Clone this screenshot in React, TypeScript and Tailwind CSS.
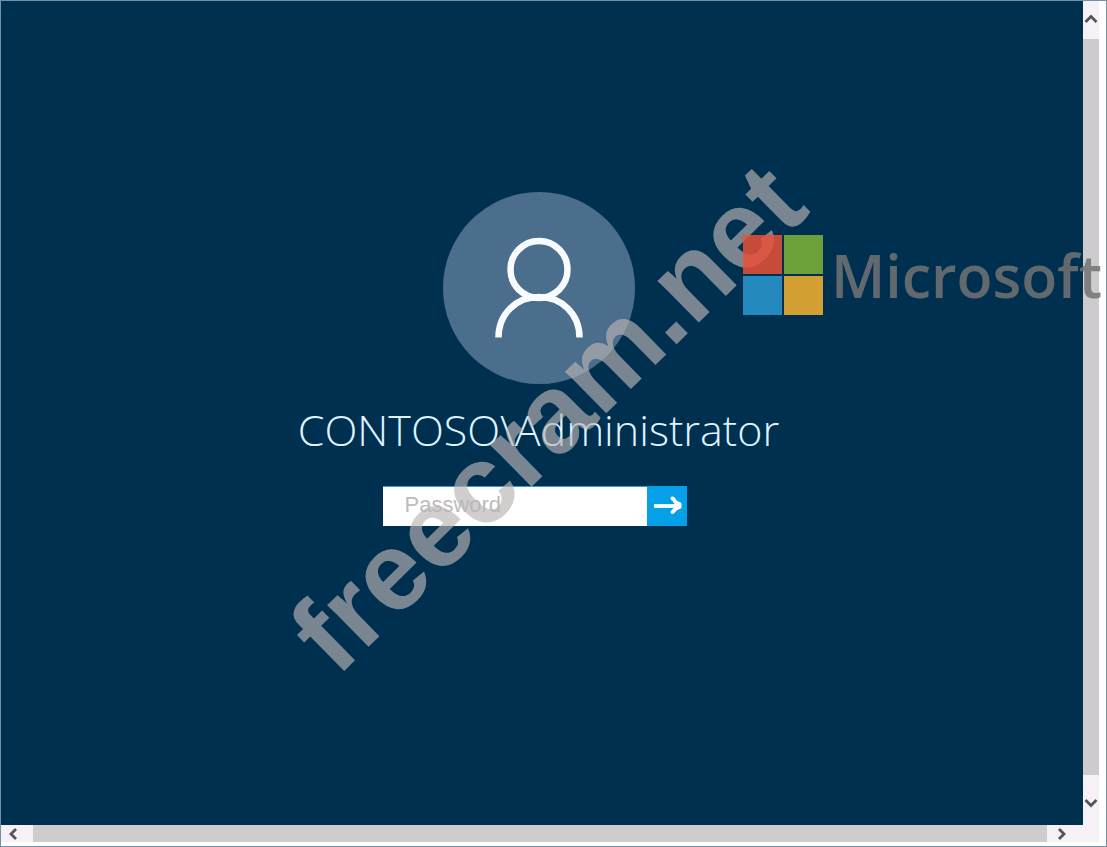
import { useState } from "react";

const UserIcon = () => (
  <svg viewBox="0 0 96 108" className="h-[108px] w-24" fill="none" stroke="#f8fcff" strokeWidth="6.5" aria-hidden="true">
    <circle cx="48" cy="35.5" r="28.5" />
    <path d="M7.5 103.5C7.5 80 25 63 48 63S88.5 80 88.5 103.5" />
  </svg>
);

const ArrowIcon = () => (
  <svg viewBox="0 0 40 40" className="size-10" fill="none" stroke="white" aria-hidden="true">
    <path d="M7 20H31" strokeWidth="3.8" />
    <path d="M25.5 12.5C27 12 27 15.5 29 16.5L32.5 18V21L29 22.5C27 23.5 27 26 25.5 26" strokeWidth="4" strokeLinecap="round" strokeLinejoin="round" />
  </svg>
);

const Chevron = ({ d }: { d: string }) => (
  <svg viewBox="0 0 16 16" className="size-4" fill="none" stroke="#55535a" strokeWidth="2.8" aria-hidden="true">
    <path d={d} />
  </svg>
);

const MicrosoftLogo = () => (
  <div className="pointer-events-none absolute top-[234px] right-1 flex items-center gap-2 opacity-85">
    <div className="grid grid-cols-2 gap-[2px]">
      <span className="size-[39px] bg-[#ea5036]" />
      <span className="size-[39px] bg-[#7eb534]" />
      <span className="size-[39px] bg-[#2b9ad0]" />
      <span className="size-[39px] bg-[#fbb42e]" />
    </div>
    <span className="font-['Open_Sans',sans-serif] text-[59px] leading-[80px] font-semibold text-[#747474]">
      Microsoft
    </span>
  </div>
);

export default function App() {
  const [password, setPassword] = useState("");

  return (
    <div className="relative flex min-h-screen flex-col overflow-hidden border border-[#7590a5] bg-white pr-[7px] pb-1 font-['Liberation_Sans',sans-serif]">
      <div className="flex flex-1">
        {/* Sign-in screen */}
        <main className="flex flex-1 flex-col items-center bg-[#003050] pt-[191px] pr-[7px]">
          <div className="flex size-48 items-center justify-center rounded-full bg-[#4b6e8c]">
            <UserIcon />
          </div>
          <h1 className="mt-4 font-['Open_Sans',sans-serif] text-[43px] leading-[60px] font-light text-[#dff4ff]">
            CONTOSO\Administrator
          </h1>
          <form className="mt-[26px] mr-2 flex" onSubmit={(e) => e.preventDefault()}>
            <input
              type="password"
              aria-label="Password"
              placeholder="Password"
              value={password}
              onChange={(e) => setPassword(e.target.value)}
              className="h-10 w-[264px] border-t border-[#3c9ad0] bg-white px-[22px] pb-1 text-[22px] text-gray-800 outline-none placeholder:text-[#bcbcbc]"
            />
            <button type="submit" aria-label="Sign in" className="size-10 bg-[#05a0e8]">
              <ArrowIcon />
            </button>
          </form>
        </main>

        {/* Vertical scrollbar */}
        <div className="flex w-4 flex-col bg-[#f6f1f6]">
          <button type="button" aria-label="Scroll up" className="flex h-[38px] items-center justify-center">
            <Chevron d="M2.5 10L8 4.5L13.5 10" />
          </button>
          <div className="flex-1 bg-[#cdcbcd]" />
          <button type="button" aria-label="Scroll down" className="flex h-[50px] items-center justify-center pt-1">
            <Chevron d="M2.5 6L8 11.5L13.5 6" />
          </button>
        </div>
      </div>

      {/* Horizontal scrollbar */}
      <div className="flex h-[17px] bg-[#f6f1f6]">
        <button type="button" aria-label="Scroll left" className="flex w-8 items-center px-1">
          <Chevron d="M11 3L6 8L11 13" />
        </button>
        <div className="flex-1 bg-[#cdcdcd]" />
        <button type="button" aria-label="Scroll right" className="flex w-[52px] items-center px-2">
          <Chevron d="M4 3L9 8L4 13" />
        </button>
      </div>

      {/* Watermark */}
      <div className="pointer-events-none absolute top-[49.4%] left-[49.5%] -translate-x-1/2 -translate-y-1/2 rotate-[-44.5deg] text-[111px] leading-none font-bold whitespace-nowrap text-[#bab4b4]/65">
        freecram.net
      </div>

      <MicrosoftLogo />
    </div>
  );
}
